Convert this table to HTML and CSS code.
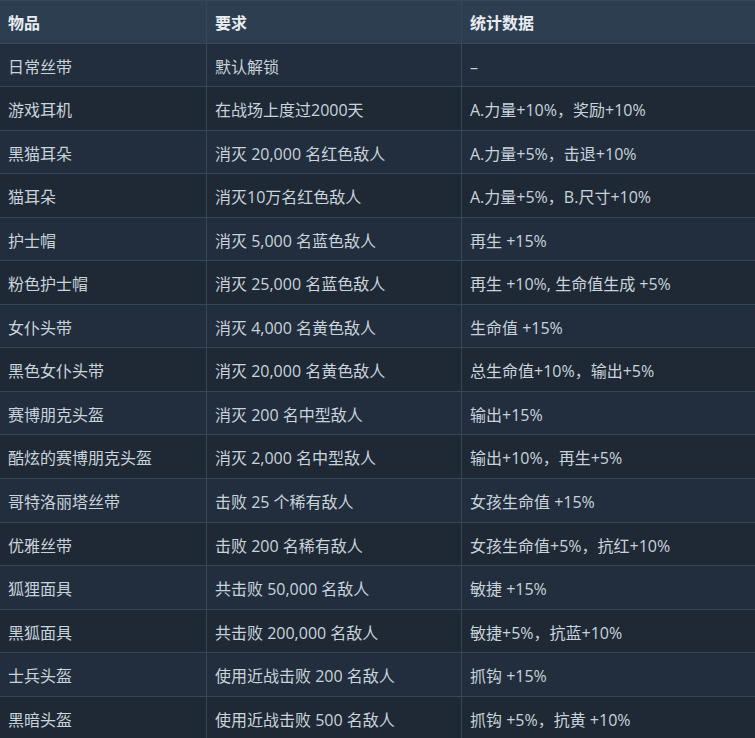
FILE: index.html
```html
<!DOCTYPE html>
<html lang="zh">
<head>
<meta charset="utf-8">
<link rel="stylesheet" href="styles.css">
</head>
<body>
<table class="tbl">
  <colgroup>
    <col class="c1"><col class="c2"><col class="c3">
  </colgroup>
  <thead>
    <tr><th>物品</th><th>要求</th><th>统计数据</th></tr>
  </thead>
  <tbody>
    <tr><td>日常丝带</td><td>默认解锁</td><td>–</td></tr>
    <tr><td>游戏耳机</td><td>在战场上度过2000天</td><td>A.力量+10%，奖励+10%</td></tr>
    <tr><td>黑猫耳朵</td><td>消灭 20,000 名红色敌人</td><td>A.力量+5%，击退+10%</td></tr>
    <tr><td>猫耳朵</td><td>消灭10万名红色敌人</td><td>A.力量+5%，B.尺寸+10%</td></tr>
    <tr><td>护士帽</td><td>消灭 5,000 名蓝色敌人</td><td>再生 +15%</td></tr>
    <tr><td>粉色护士帽</td><td>消灭 25,000 名蓝色敌人</td><td>再生 +10%, 生命值生成 +5%</td></tr>
    <tr><td>女仆头带</td><td>消灭 4,000 名黄色敌人</td><td>生命值 +15%</td></tr>
    <tr><td>黑色女仆头带</td><td>消灭 20,000 名黄色敌人</td><td>总生命值+10%，输出+5%</td></tr>
    <tr><td>赛博朋克头盔</td><td>消灭 200 名中型敌人</td><td>输出+15%</td></tr>
    <tr><td>酷炫的赛博朋克头盔</td><td>消灭 2,000 名中型敌人</td><td>输出+10%，再生+5%</td></tr>
    <tr><td>哥特洛丽塔丝带</td><td>击败 25 个稀有敌人</td><td>女孩生命值 +15%</td></tr>
    <tr><td>优雅丝带</td><td>击败 200 名稀有敌人</td><td>女孩生命值+5%，抗红+10%</td></tr>
    <tr><td>狐狸面具</td><td>共击败 50,000 名敌人</td><td>敏捷 +15%</td></tr>
    <tr><td>黑狐面具</td><td>共击败 200,000 名敌人</td><td>敏捷+5%，抗蓝+10%</td></tr>
    <tr><td>士兵头盔</td><td>使用近战击败 200 名敌人</td><td>抓钩 +15%</td></tr>
    <tr><td>黑暗头盔</td><td>使用近战击败 500 名敌人</td><td>抓钩 +5%，抗黄 +10%</td></tr>
  </tbody>
</table>
</body>
</html>
```

FILE: styles.css
```css
html, body {
  margin: 0;
  padding: 0;
  background: #1f2935;
}
body {
  font-family: "Open Sans", "Noto Sans CJK SC", sans-serif;
  font-size: 16px;
  color: #c9d3dc;
  overflow: hidden;
}
.tbl {
  width: 756px;
  margin-left: -1px;
  border-collapse: collapse;
  table-layout: fixed;
}
.c1 { width: 207px; }
.c2 { width: 255px; }
.c3 { width: 294px; }
.tbl th, .tbl td {
  border: 1px solid #34465a;
  padding: 12px 8px 8px 8px;
  line-height: 22.55px;
  text-align: left;
  vertical-align: top;
  white-space: nowrap;
}
.tbl th {
  background: #2d3e51;
  color: #e8edf1;
  font-weight: 700;
  padding-top: 11px;
  padding-bottom: 8px;
}
.tbl tbody tr:nth-child(odd) td {
  background: #222e3d;
}
.tbl tbody tr:nth-child(even) td {
  background: #1f2935;
}
```
